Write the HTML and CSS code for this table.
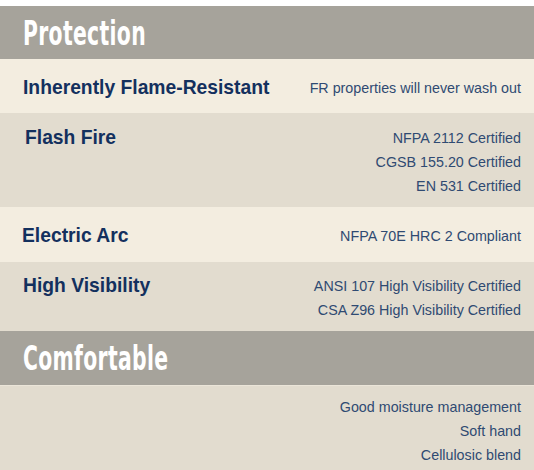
FILE: index.html
```html
<!DOCTYPE html>
<html>
<head>
<meta charset="utf-8">
<link rel="stylesheet" href="styles.css">
</head>
<body>
<div class="sheet">
  <h2 class="section-head"><span class="head-text">Protection</span></h2>
  <div class="row light r1">
    <div class="label">Inherently Flame-Resistant</div>
    <div class="values"><div>FR properties will never wash out</div></div>
  </div>
  <div class="row dark r2">
    <div class="label l2">Flash Fire</div>
    <div class="values"><div>NFPA 2112 Certified</div><div>CGSB 155.20 Certified</div><div>EN 531 Certified</div></div>
  </div>
  <div class="row light r3">
    <div class="label l3">Electric Arc</div>
    <div class="values"><div>NFPA 70E HRC 2 Compliant</div></div>
  </div>
  <div class="row dark r4">
    <div class="label">High Visibility</div>
    <div class="values"><div>ANSI 107 High Visibility Certified</div><div>CSA Z96 High Visibility Certified</div></div>
  </div>
  <h2 class="section-head head2"><span class="head-text">Comfortable</span></h2>
  <div class="row dark r5">
    <div class="label"></div>
    <div class="values"><div>Good moisture management</div><div>Soft hand</div><div>Cellulosic blend</div></div>
  </div>
</div>
</body>
</html>
```
FILE: styles.css
```css
html, body {
  margin: 0;
  padding: 0;
  background: #ffffff;
}
.sheet {
  width: 534px;
  padding-top: 6px;
  font-family: "Liberation Sans", Arial, sans-serif;
}
.section-head {
  margin: 0;
  height: 53px;
  background: #a6a39b;
  display: flex;
  align-items: center;
  padding-left: 23px;
  box-sizing: border-box;
}
.head2 {
  height: 55px;
  border-bottom: 1px solid #ebe5d9;
}
.head-text {
  display: inline-block;
  font-family: "DejaVu Sans Condensed", "DejaVu Sans", sans-serif;
  font-weight: bold;
  font-size: 34px;
  color: #ffffff;
  transform: scaleX(0.665);
  transform-origin: left center;
  line-height: 1;
  letter-spacing: 0.5px;
}
.row {
  display: flex;
  justify-content: space-between;
  align-items: flex-start;
  padding-left: 23px;
  padding-right: 13px;
  box-sizing: border-box;
  line-height: 24px;
}
.light { background: #f3ede0; }
.dark { background: #e2dccf; }
.label {
  font-weight: bold;
  font-size: 19.3px;
  color: #13305e;
}
.l2 { margin-left: 2px; }
.l3 { margin-left: -1px; }
.values {
  text-align: right;
  font-size: 14.3px;
  color: #2f4a72;
}
.r1 { height: 54px; padding-top: 17px; }
.r2 { height: 94px; padding-top: 13px; }
.r3 { height: 55px; padding-top: 17px; }
.r4 { height: 69px; padding-top: 12px; }
.r5 { height: 84px; padding-top: 9px; }
```
